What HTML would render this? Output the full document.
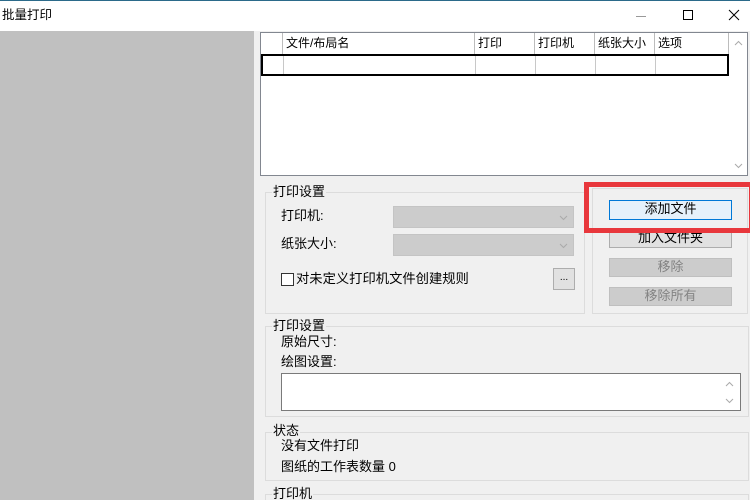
<!DOCTYPE html>
<html><head><meta charset="utf-8"><style>
*{box-sizing:border-box;margin:0;padding:0}
html,body{width:750px;height:500px;overflow:hidden}
body{background:#f0f0f0;font-family:"Liberation Sans","Noto Sans CJK SC",sans-serif;font-size:12.5px;color:#000;position:relative}
.a{position:absolute}
.t{position:absolute;white-space:nowrap;line-height:14px}
.grp{position:absolute;border:1px solid #dcdcdc}
.gt{position:absolute;background:#f0f0f0;padding:0 1px;line-height:14px;white-space:nowrap}
.btn{position:absolute;border:1px solid #adadad;background:#e1e1e1;text-align:center;line-height:16px;font-size:13px}
.dis{background:#cccccc;border-color:#bfbfbf;color:#838383}
.cmb{position:absolute;background:#cccccc;border:1px solid #c4c4c4}
.hd{position:absolute;top:33px;height:21px;border-right:1px solid #bcbcbc;line-height:20px;padding-left:3px;background:#fff;font-size:12px}
.cl{position:absolute;top:56px;height:18px;width:1px;background:#c8c8c8}
</style></head><body>
<div class="a" style="left:0;top:0;width:750px;height:31px;background:#fff;border-top:1px solid #2b6a8a"></div>
<div class="t" style="left:2px;top:8px">批量打印</div>
<div class="a" style="left:636px;top:16px;width:10px;height:1px;background:#999"></div>
<div class="a" style="left:683px;top:10px;width:10px;height:10px;border:1px solid #000"></div>
<svg class="a" style="left:728px;top:9px" width="12" height="12"><path d="M1 1L11 11M11 1L1 11" stroke="#000" stroke-width="1"/></svg>
<div class="a" style="left:0;top:31px;width:254px;height:469px;background:#c0c0c0"></div>

<div class="a" style="left:260px;top:32px;width:488px;height:144px;background:#fff;border:1px solid #828790"></div>
<div class="hd" style="left:261px;width:22px"></div>
<div class="hd" style="left:283px;width:192px">文件/布局名</div>
<div class="hd" style="left:475px;width:60px">打印</div>
<div class="hd" style="left:535px;width:60px">打印机</div>
<div class="hd" style="left:595px;width:60px">纸张大小</div>
<div class="hd" style="left:655px;width:74px">选项</div>
<div class="a" style="left:261px;top:54px;width:468px;height:1px;background:#bcbcbc"></div>
<div class="a" style="left:261px;top:54px;width:468px;height:22px;border:2px solid #000"></div>
<div class="cl" style="left:283px"></div><div class="cl" style="left:475px"></div><div class="cl" style="left:535px"></div><div class="cl" style="left:595px"></div><div class="cl" style="left:655px"></div>
<svg class="a" style="left:734px;top:40px" width="9" height="6"><path d="M1 5L4.5 1.5L8 5" stroke="#aaa" fill="none"/></svg>
<svg class="a" style="left:734px;top:163px" width="9" height="6"><path d="M1 1L4.5 4.5L8 1" stroke="#aaa" fill="none"/></svg>

<div class="grp" style="left:265px;top:192px;width:320px;height:122px"></div>
<div class="gt" style="left:272px;top:185px;font-size:13px">打印设置</div>
<div class="t" style="left:281px;top:209px;font-size:13px">打印机:</div>
<div class="cmb" style="left:393px;top:206px;width:181px;height:22px"></div>
<svg class="a" style="left:559px;top:215px" width="9" height="6"><path d="M1 1L4.5 4.5L8 1" stroke="#aaa" fill="none"/></svg>
<div class="t" style="left:281px;top:237px;font-size:13px">纸张大小:</div>
<div class="cmb" style="left:393px;top:234px;width:181px;height:22px"></div>
<svg class="a" style="left:559px;top:243px" width="9" height="6"><path d="M1 1L4.5 4.5L8 1" stroke="#aaa" fill="none"/></svg>
<div class="a" style="left:281px;top:273px;width:13px;height:13px;border:1px solid #333;background:#fff"></div>
<div class="t" style="left:296px;top:272px;font-size:13.3px">对未定义打印机文件创建规则</div>
<div class="btn" style="left:553px;top:268px;width:22px;height:22px;line-height:18px;font-size:10px">...</div>

<div class="grp" style="left:592px;top:188px;width:156px;height:126px"></div>
<div class="btn" style="left:609px;top:200px;width:123px;height:20px;background:#e5f1fb;border-color:#0078d7">添加文件</div>
<div class="btn" style="left:609px;top:229px;width:123px;height:19px">加入文件夹</div>
<div class="btn dis" style="left:609px;top:258px;width:123px;height:19px">移除</div>
<div class="btn dis" style="left:609px;top:287px;width:123px;height:19px">移除所有</div>
<div class="a" style="left:584px;top:182px;width:170px;height:51px;border:5px solid #e8373c"></div>

<div class="grp" style="left:265px;top:326px;width:484px;height:91px"></div>
<div class="gt" style="left:272px;top:319px;font-size:13px">打印设置</div>
<div class="t" style="left:281px;top:335px;font-size:13px">原始尺寸:</div>
<div class="t" style="left:281px;top:355px;font-size:13px">绘图设置:</div>
<div class="a" style="left:281px;top:373px;width:460px;height:38px;background:#fff;border:1px solid #7a7a7a"></div>
<svg class="a" style="left:725px;top:381px" width="9" height="6"><path d="M1 5L4.5 1.5L8 5" stroke="#aaa" fill="none"/></svg>
<svg class="a" style="left:725px;top:398px" width="9" height="6"><path d="M1 1L4.5 4.5L8 1" stroke="#aaa" fill="none"/></svg>

<div class="grp" style="left:265px;top:432px;width:484px;height:49px"></div>
<div class="gt" style="left:272px;top:424px;font-size:13px">状态</div>
<div class="t" style="left:281px;top:439px;font-size:13px">没有文件打印</div>
<div class="t" style="left:281px;top:460px;font-size:13px">图纸的工作表数量 0</div>

<div class="grp" style="left:265px;top:494px;width:484px;height:6px;border-bottom:none"></div>
<div class="gt" style="left:272px;top:487px;font-size:13px">打印机</div>
</body></html>
